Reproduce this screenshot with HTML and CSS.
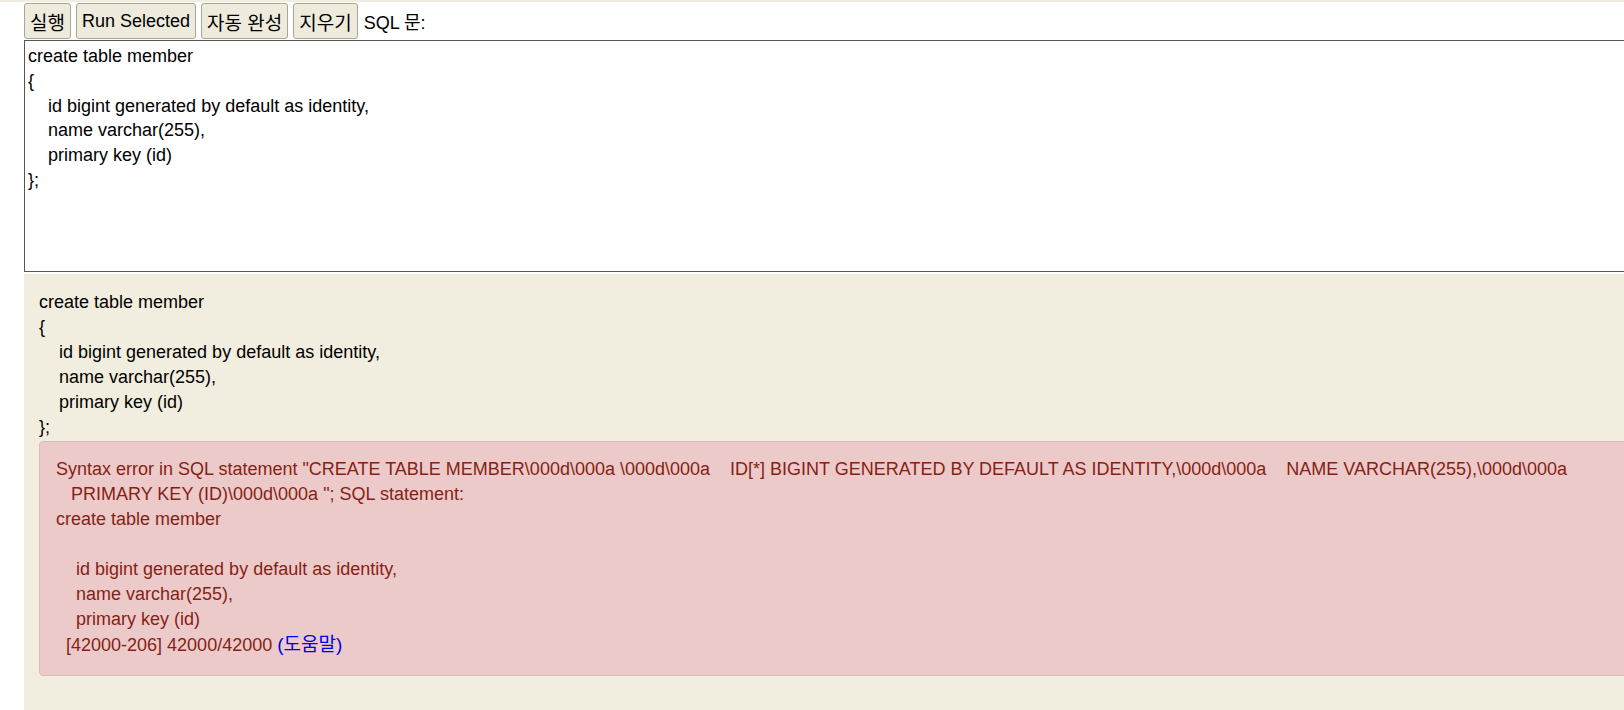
FILE: index.html
```html
<!DOCTYPE html>
<html lang="ko">
<head>
  <meta charset="UTF-8">
  <meta name="viewport" content="width=device-width, initial-scale=1.0">
  <title>H2 Console</title>
  <link rel="stylesheet" href="styles.css">
</head>
<body>
  <div class="console">
    <form class="toolbar" onsubmit="return false">
      <button type="button" class="ko">실행</button>
      <button type="button">Run Selected</button>
      <button type="button" class="ko">자동 완성</button>
      <button type="button" class="ko">지우기</button>
      <label for="sql">SQL 문:</label>
    </form>
    <textarea id="sql" class="query" spellcheck="false">create table member
{
    id bigint generated by default as identity,
    name varchar(255),
    primary key (id)
};</textarea>

    <div class="result">
      <div class="sql">create table member
{
    id bigint generated by default as identity,
    name varchar(255),
    primary key (id)
};</div>
      <div class="error">Syntax error in SQL statement "CREATE TABLE MEMBER\000d\000a \000d\000a &nbsp;&nbsp;&nbsp;ID[*] BIGINT GENERATED BY DEFAULT AS IDENTITY,\000d\000a &nbsp;&nbsp;&nbsp;NAME VARCHAR(255),\000d\000a &nbsp;&nbsp;&nbsp;PRIMARY KEY (ID)\000d\000a "; SQL statement:<br>
        create table member<br>
        <br>
        &nbsp;&nbsp;&nbsp;&nbsp;id bigint generated by default as identity,<br>
        &nbsp;&nbsp;&nbsp;&nbsp;name varchar(255),<br>
        &nbsp;&nbsp;&nbsp;&nbsp;primary key (id)<br>
        &nbsp;&nbsp;[42000-206] 42000/42000 <a href="#" class="help">(도움말)</a></div>
    </div>
  </div>
</body>
</html>
```

FILE: styles.css
```css
html, body {
  margin: 0;
  height: 100%;
}
body {
  font-family: "Liberation Sans", Arial, "Noto Sans CJK KR", sans-serif;
  font-size: 18px;
  color: #000;
  background-color: #fff;
  border-top: 2px solid #f2eedf;
  box-sizing: border-box;
  overflow: hidden;
  display: flex;
  flex-direction: column;
}
.console {
  margin-left: 24px;
  width: 1640px;
  flex: 1;
  display: flex;
  flex-direction: column;
}
.toolbar {
  display: flex;
  align-items: center;
  gap: 5px;
  padding: 1px 0;
  margin: 0;
}
.toolbar button {
  height: 36px;
  padding: 0 5px;
  font: inherit;
  color: #000;
  background-color: #eeebdc;
  border: 1px solid #aaa597;
  border-radius: 3px;
  cursor: pointer;
}
.toolbar button.ko {
  font-size: 19px;
}
.toolbar button:hover {
  background-color: #e4e0cc;
}
.toolbar label {
  margin-left: 1px;
}
.query {
  display: block;
  box-sizing: border-box;
  width: 100%;
  height: 232px;
  margin: 0;
  padding: 3px;
  border: 1px solid #555;
  font: inherit;
  line-height: 24.8px;
  color: #000;
  background-color: #fff;
  resize: none;
  outline: none;
}
.result {
  flex: 1;
  margin-top: 2px;
  padding: 16px 15px 0;
  background-color: #f2eedf;
}
.sql {
  white-space: pre;
  line-height: 25px;
}
.error {
  margin-top: 1px;
  padding: 15px 16px 17px;
  line-height: 25px;
  color: #861f14;
  background-color: #edcaca;
  border: 1px solid #e0b8b8;
  border-radius: 4px;
}
.help {
  color: #0000ee;
  font-size: 19px;
  text-decoration: none;
}
```
